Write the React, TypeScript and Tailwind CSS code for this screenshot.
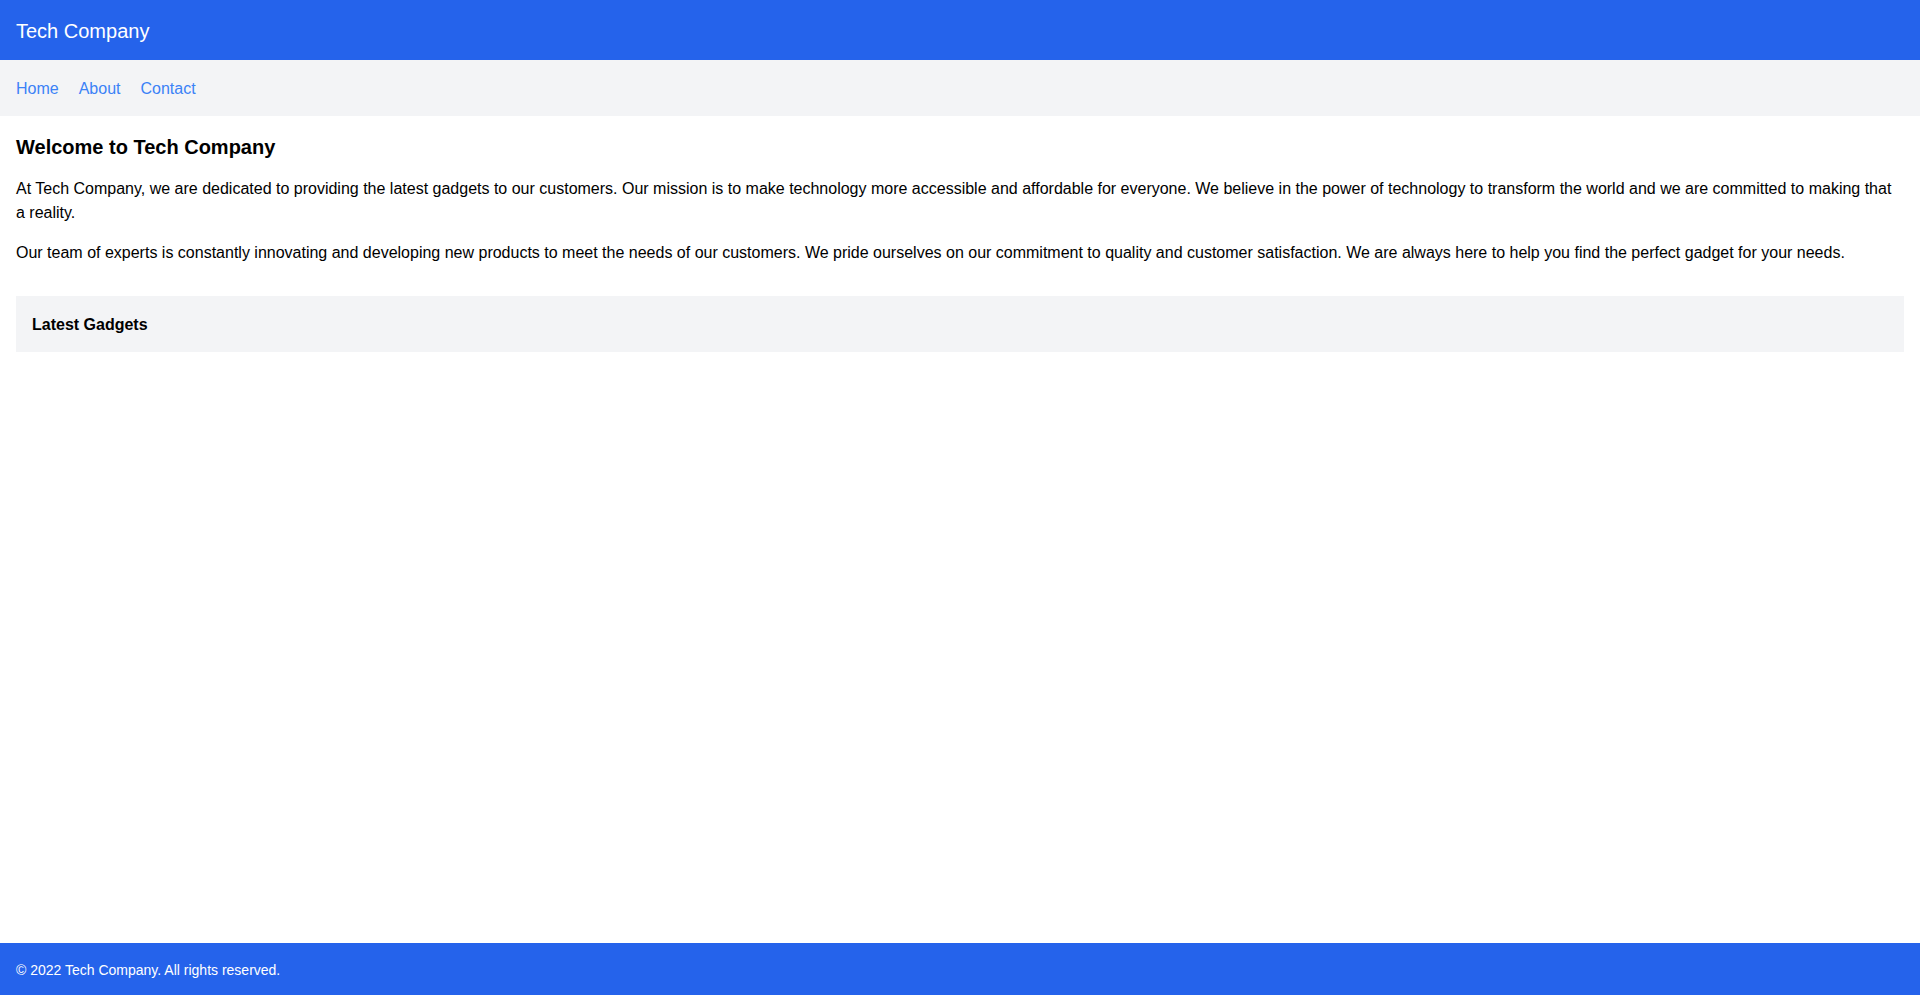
import React from "react";

export default function App() {
  return (
    <div
      className="min-h-screen flex flex-col bg-white text-black"
      style={{ fontFamily: '"Liberation Sans", Arial, sans-serif' }}
    >
      <header className="bg-[#2563eb] text-white px-4 pt-[17px] pb-[15px]">
        <h1 className="text-xl leading-7 font-normal">Tech Company</h1>
      </header>
      <nav className="bg-[#f3f4f6] px-4 pt-[17px] pb-[15px]">
        <ul className="flex gap-5 text-base leading-6">
          <li><a href="#" className="text-[#3b82f6]">Home</a></li>
          <li><a href="#" className="text-[#3b82f6]">About</a></li>
          <li><a href="#" className="text-[#3b82f6]">Contact</a></li>
        </ul>
      </nav>
      <main className="flex-1 px-4 pt-[17px] pb-4">
        <h2 className="text-xl leading-7 font-bold mb-4">Welcome to Tech Company</h2>
        <p className="text-base leading-6 mb-4">
          At Tech Company, we are dedicated to providing the latest gadgets to our customers. Our mission is to make technology more accessible and affordable for everyone. We believe in the power of technology to transform the world and we are committed to making that a reality.
        </p>
        <p className="text-base leading-6 mb-4">
          Our team of experts is constantly innovating and developing new products to meet the needs of our customers. We pride ourselves on our commitment to quality and customer satisfaction. We are always here to help you find the perfect gadget for your needs.
        </p>
        <section className="mt-[31px] bg-[#f3f4f6] px-4 pt-[17px] pb-[15px]">
          <h3 className="text-base leading-6 font-bold">Latest Gadgets</h3>
        </section>
      </main>
      <footer className="bg-[#2563eb] text-white px-4 pt-[17px] pb-[15px]">
        <p className="text-sm leading-5">© 2022 Tech Company. All rights reserved.</p>
      </footer>
    </div>
  );
}
